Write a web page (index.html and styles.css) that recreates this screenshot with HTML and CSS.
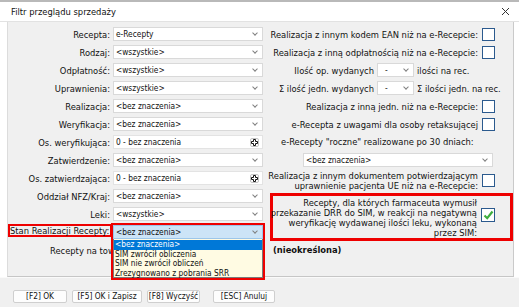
FILE: index.html
```html
<!DOCTYPE html>
<html lang="pl">
<head>
    <meta charset="UTF-8">
    <title>Filtr przeglądu sprzedaży</title>
    <link rel="stylesheet" href="styles.css">
</head>
<body>
<div class="window">
    <div class="titlebar">
        <span>Filtr przeglądu sprzedaży</span>
        <svg class="close" width="9" height="9" viewBox="0 0 9 9"><path d="M1 1L8 8M8 1L1 8" stroke="#333" stroke-width="1"/></svg>
    </div>

    <div class="panel">
        <!-- lewa kolumna: pola wyboru -->
        <div class="left">
            <div class="label">Recepta:</div>
            <div class="select"><span>e-Recepty</span></div>
            <div class="label">Rodzaj:</div>
            <div class="select"><span>&lt;wszystkie&gt;</span></div>
            <div class="label">Odpłatność:</div>
            <div class="select"><span>&lt;wszystkie&gt;</span></div>
            <div class="label">Uprawnienia:</div>
            <div class="select"><span>&lt;wszystkie&gt;</span></div>
            <div class="label">Realizacja:</div>
            <div class="select"><span>&lt;bez znaczenia&gt;</span></div>
            <div class="label">Weryfikacja:</div>
            <div class="select"><span>&lt;bez znaczenia&gt;</span></div>
            <div class="label">Os. weryfikująca:</div>
            <div class="lookup"><span>0 - bez znaczenia</span><span class="plus"><svg width="7" height="7" viewBox="0 0 7 7"><path d="M2.5 0.5H4.5V2.5H6.5V4.5H4.5V6.5H2.5V4.5H0.5V2.5H2.5Z" fill="#fff" stroke="#111" stroke-width="1"/></svg></span></div>
            <div class="label">Zatwierdzenie:</div>
            <div class="select"><span>&lt;bez znaczenia&gt;</span></div>
            <div class="label">Os. zatwierdzająca:</div>
            <div class="lookup"><span>0 - bez znaczenia</span><span class="plus"><svg width="7" height="7" viewBox="0 0 7 7"><path d="M2.5 0.5H4.5V2.5H6.5V4.5H4.5V6.5H2.5V4.5H0.5V2.5H2.5Z" fill="#fff" stroke="#111" stroke-width="1"/></svg></span></div>
            <div class="label">Oddział NFZ/Kraj:</div>
            <div class="select"><span>&lt;bez znaczenia&gt;</span></div>
            <div class="label">Leki:</div>
            <div class="select"><span>&lt;wszystkie&gt;</span></div>
            <div class="label"><div class="mark">Stan Realizacji Recepty:</div></div>
            <div class="field-open">
                <div class="popup">
                    <div class="select focus"><span>&lt;bez znaczenia&gt;</span></div>
                    <div class="list">
                        <div class="item active">&lt;bez znaczenia&gt;</div>
                        <div class="item">SIM zwrócił obliczenia</div>
                        <div class="item">SIM nie zwrócił obliczeń</div>
                        <div class="item">Zrezygnowano z pobrania SRR</div>
                    </div>
                </div>
            </div>
            <div class="wide-label">Recepty na towar:</div>
        </div>

        <!-- prawa kolumna: przełączniki -->
        <div class="right">
            <div class="chk-row"><span>Realizacja z innym kodem EAN niż na e-Recepcie:</span><span class="check"></span></div>
            <div class="chk-row"><span>Realizacja z inną odpłatnością niż na e-Recepcie:</span><span class="check"></span></div>
            <div class="qty-row">
                <span class="pre">Ilość op. wydanych</span>
                <div class="select small"><span>-</span></div>
                <span>ilości na rec.</span>
            </div>
            <div class="qty-row">
                <span class="pre">Σ ilość jedn. wydanych</span>
                <div class="select small"><span>-</span></div>
                <span>Σ ilości jedn. na rec.</span>
            </div>
            <div class="chk-row"><span>Realizacja z inną jedn. niż na e-Recepcie:</span><span class="check"></span></div>
            <div class="chk-row"><span>e-Recepta z uwagami dla osoby retaksującej</span><span class="check"></span></div>
            <div class="note">e-Recepty "roczne" realizowane po 30 dniach:</div>
            <div class="sel-row"><div class="select yearly"><span>&lt;bez znaczenia&gt;</span></div></div>
            <div class="chk-row multi"><span>Realizacja z innym dokumentem potwierdzającym<br>uprawnienie pacjenta UE niż na e-Recepcie:</span><span class="check"></span></div>
            <div class="mark-box">
                <span>Recepty, dla których farmaceuta wymusił<br>przekazanie DRR do SIM, w reakcji na negatywną<br>weryfikację wydawanej ilości leku, wykonaną<br>przez SIM:</span>
                <span class="check checked"><svg width="11" height="10" viewBox="0 0 11 10"><path d="M1.5 5.5L4.2 8.2L9.5 1.5" fill="none" stroke="#3fae3f" stroke-width="2.2"/></svg></span>
            </div>
            <div class="value">(nieokreślona)</div>
        </div>
    </div>

    <div class="footer">
        <button>[F2] OK</button>
        <button>[F5] OK i Zapisz</button>
        <button>[F8] Wyczyść</button>
        <button class="cancel">[ESC] Anuluj</button>
    </div>
</div>
</body>
</html>
```

FILE: styles.css
```css
body {
    margin: 0;
    width: 519px;
    height: 307px;
    overflow: hidden;
    background-color: #fff;
    font-family: "DejaVu Sans Condensed", "DejaVu Sans", sans-serif;
    font-size: 9.3px;
    color: #111;
}
.window {
    height: 307px;
    border-top: 2px solid #b9b9b9;
    box-sizing: border-box;
    display: flex;
    flex-direction: column;
}
.titlebar {
    height: 19px;
    flex: none;
    display: flex;
    align-items: center;
    justify-content: space-between;
    padding: 0 9px 0 11px;
    border-bottom: 1px solid #e2e2e2;
}
.close {
    display: block;
}
.panel {
    flex: none;
    display: flex;
    margin-left: 7px;
    width: 507px;
    height: 255px;
    box-sizing: border-box;
    background-color: #f0f0f0;
    border-left: 1px solid #dcdcdc;
    border-right: 1px solid #cacaca;
    border-bottom: 1px solid #c6c6c6;
}
.left {
    width: 255px;
    flex: none;
    display: grid;
    grid-template-columns: 102px 150px;
    grid-auto-rows: 18px;
    column-gap: 3px;
    align-items: center;
    padding-top: 3px;
}
.label {
    text-align: right;
    white-space: nowrap;
}
.select {
    height: 14px;
    box-sizing: border-box;
    display: flex;
    align-items: center;
    justify-content: space-between;
    padding: 0 5px 0 2px;
    background-color: #fff;
    border: 1px solid #d9d9d9;
    font-size: 8.3px;
    white-space: nowrap;
}
.select::after {
    content: "";
    width: 3px;
    height: 3px;
    margin-top: -3px;
    border-right: 1px solid #808080;
    border-bottom: 1px solid #808080;
    transform: rotate(45deg);
}
.lookup {
    height: 14px;
    box-sizing: border-box;
    display: flex;
    align-items: center;
    justify-content: space-between;
    padding: 0 3px 0 2px;
    background-color: #fff;
    border: 1px solid #e3e3e3;
    font-size: 8.3px;
}
.plus {
    width: 9px;
    height: 9px;
    box-sizing: border-box;
    display: flex;
    align-items: center;
    justify-content: center;
    border: 1px solid #c4c4c4;
    border-radius: 2px;
    background-color: #fafafa;
}
.plus svg {
    display: block;
}
.mark {
    border: 2px solid #ee0000;
    margin-right: -2px;
    margin-top: -4px;
    padding-right: 1px;
    line-height: 9px;
}
.field-open {
    height: 14px;
    position: relative;
    z-index: 2;
}
.popup {
    position: absolute;
    left: -2px;
    top: -2px;
    width: 154px;
    box-sizing: border-box;
    border: 2px solid #ee0000;
}
.select.focus {
    background-color: #cce4f7;
    border-color: #9cc6ea;
}
.list {
    height: 39px;
    padding-top: 1px;
    box-sizing: border-box;
    background-color: #fffbe3;
    border: 1px solid #7a7a7a;
    border-top: none;
    font-size: 8.3px;
}
.item {
    height: 9.5px;
    line-height: 9.5px;
    padding-left: 1px;
    white-space: nowrap;
}
.item.active {
    background-color: #0078d7;
    color: #fff;
}
.wide-label {
    grid-column: 1 / span 2;
    padding-left: 42px;
    white-space: nowrap;
}
.right {
    width: 243px;
    flex: none;
    margin-left: 7px;
    padding-top: 3px;
    display: flex;
    flex-direction: column;
}
.chk-row {
    height: 18px;
    flex: none;
    display: flex;
    align-items: center;
    justify-content: flex-end;
    gap: 4px;
    padding-right: 18px;
    white-space: nowrap;
    text-align: right;
}
.chk-row.multi {
    height: 23px;
    line-height: 10px;
}
.check {
    width: 13px;
    height: 13px;
    flex: none;
    box-sizing: border-box;
    border: 1px solid #2b5a8e;
    background-color: #fff;
    display: flex;
    align-items: center;
    justify-content: center;
}
.check.checked {
    width: 14px;
    height: 14px;
    margin-top: -7px;
}
.qty-row {
    height: 18px;
    flex: none;
    display: grid;
    grid-template-columns: 104px 37px 1fr;
    column-gap: 3px;
    align-items: center;
    white-space: nowrap;
}
.qty-row .pre {
    text-align: right;
}
.select.small {
    padding-left: 7px;
}
.note {
    height: 18px;
    flex: none;
    line-height: 18px;
    padding-left: 11px;
    white-space: nowrap;
}
.sel-row {
    height: 18px;
    flex: none;
    display: flex;
    align-items: center;
    padding-left: 33px;
}
.select.yearly {
    width: 190px;
}
.mark-box {
    height: 48px;
    flex: none;
    margin-top: 1px;
    box-sizing: border-box;
    border: 3px solid #ee0000;
    display: flex;
    align-items: center;
    justify-content: flex-end;
    gap: 4px;
    padding: 2px 15px 0 0;
    text-align: right;
    line-height: 10px;
    white-space: nowrap;
}
.value {
    height: 18px;
    line-height: 18px;
    padding-left: 3px;
    font-weight: bold;
}
.footer {
    flex: 1;
    display: flex;
    align-items: flex-start;
    gap: 5px;
    padding: 12px 0 0 13px;
    background-color: #f0f0f0;
    border-top: 1px solid #fafafa;
}
button {
    height: 13px;
    flex: none;
    box-sizing: border-box;
    padding: 0;
    background-color: #fdfdfd;
    border: 1px solid #cfcfcf;
    border-radius: 2px;
    font-family: inherit;
    font-size: 8.3px;
    color: #111;
    line-height: 11px;
    white-space: nowrap;
    text-align: center;
}
button:nth-child(1) {
    width: 54px;
}
button:nth-child(2) {
    width: 70px;
}
button:nth-child(3) {
    width: 53px;
}
.cancel {
    width: 62px;
    margin-left: 8px;
}
```
